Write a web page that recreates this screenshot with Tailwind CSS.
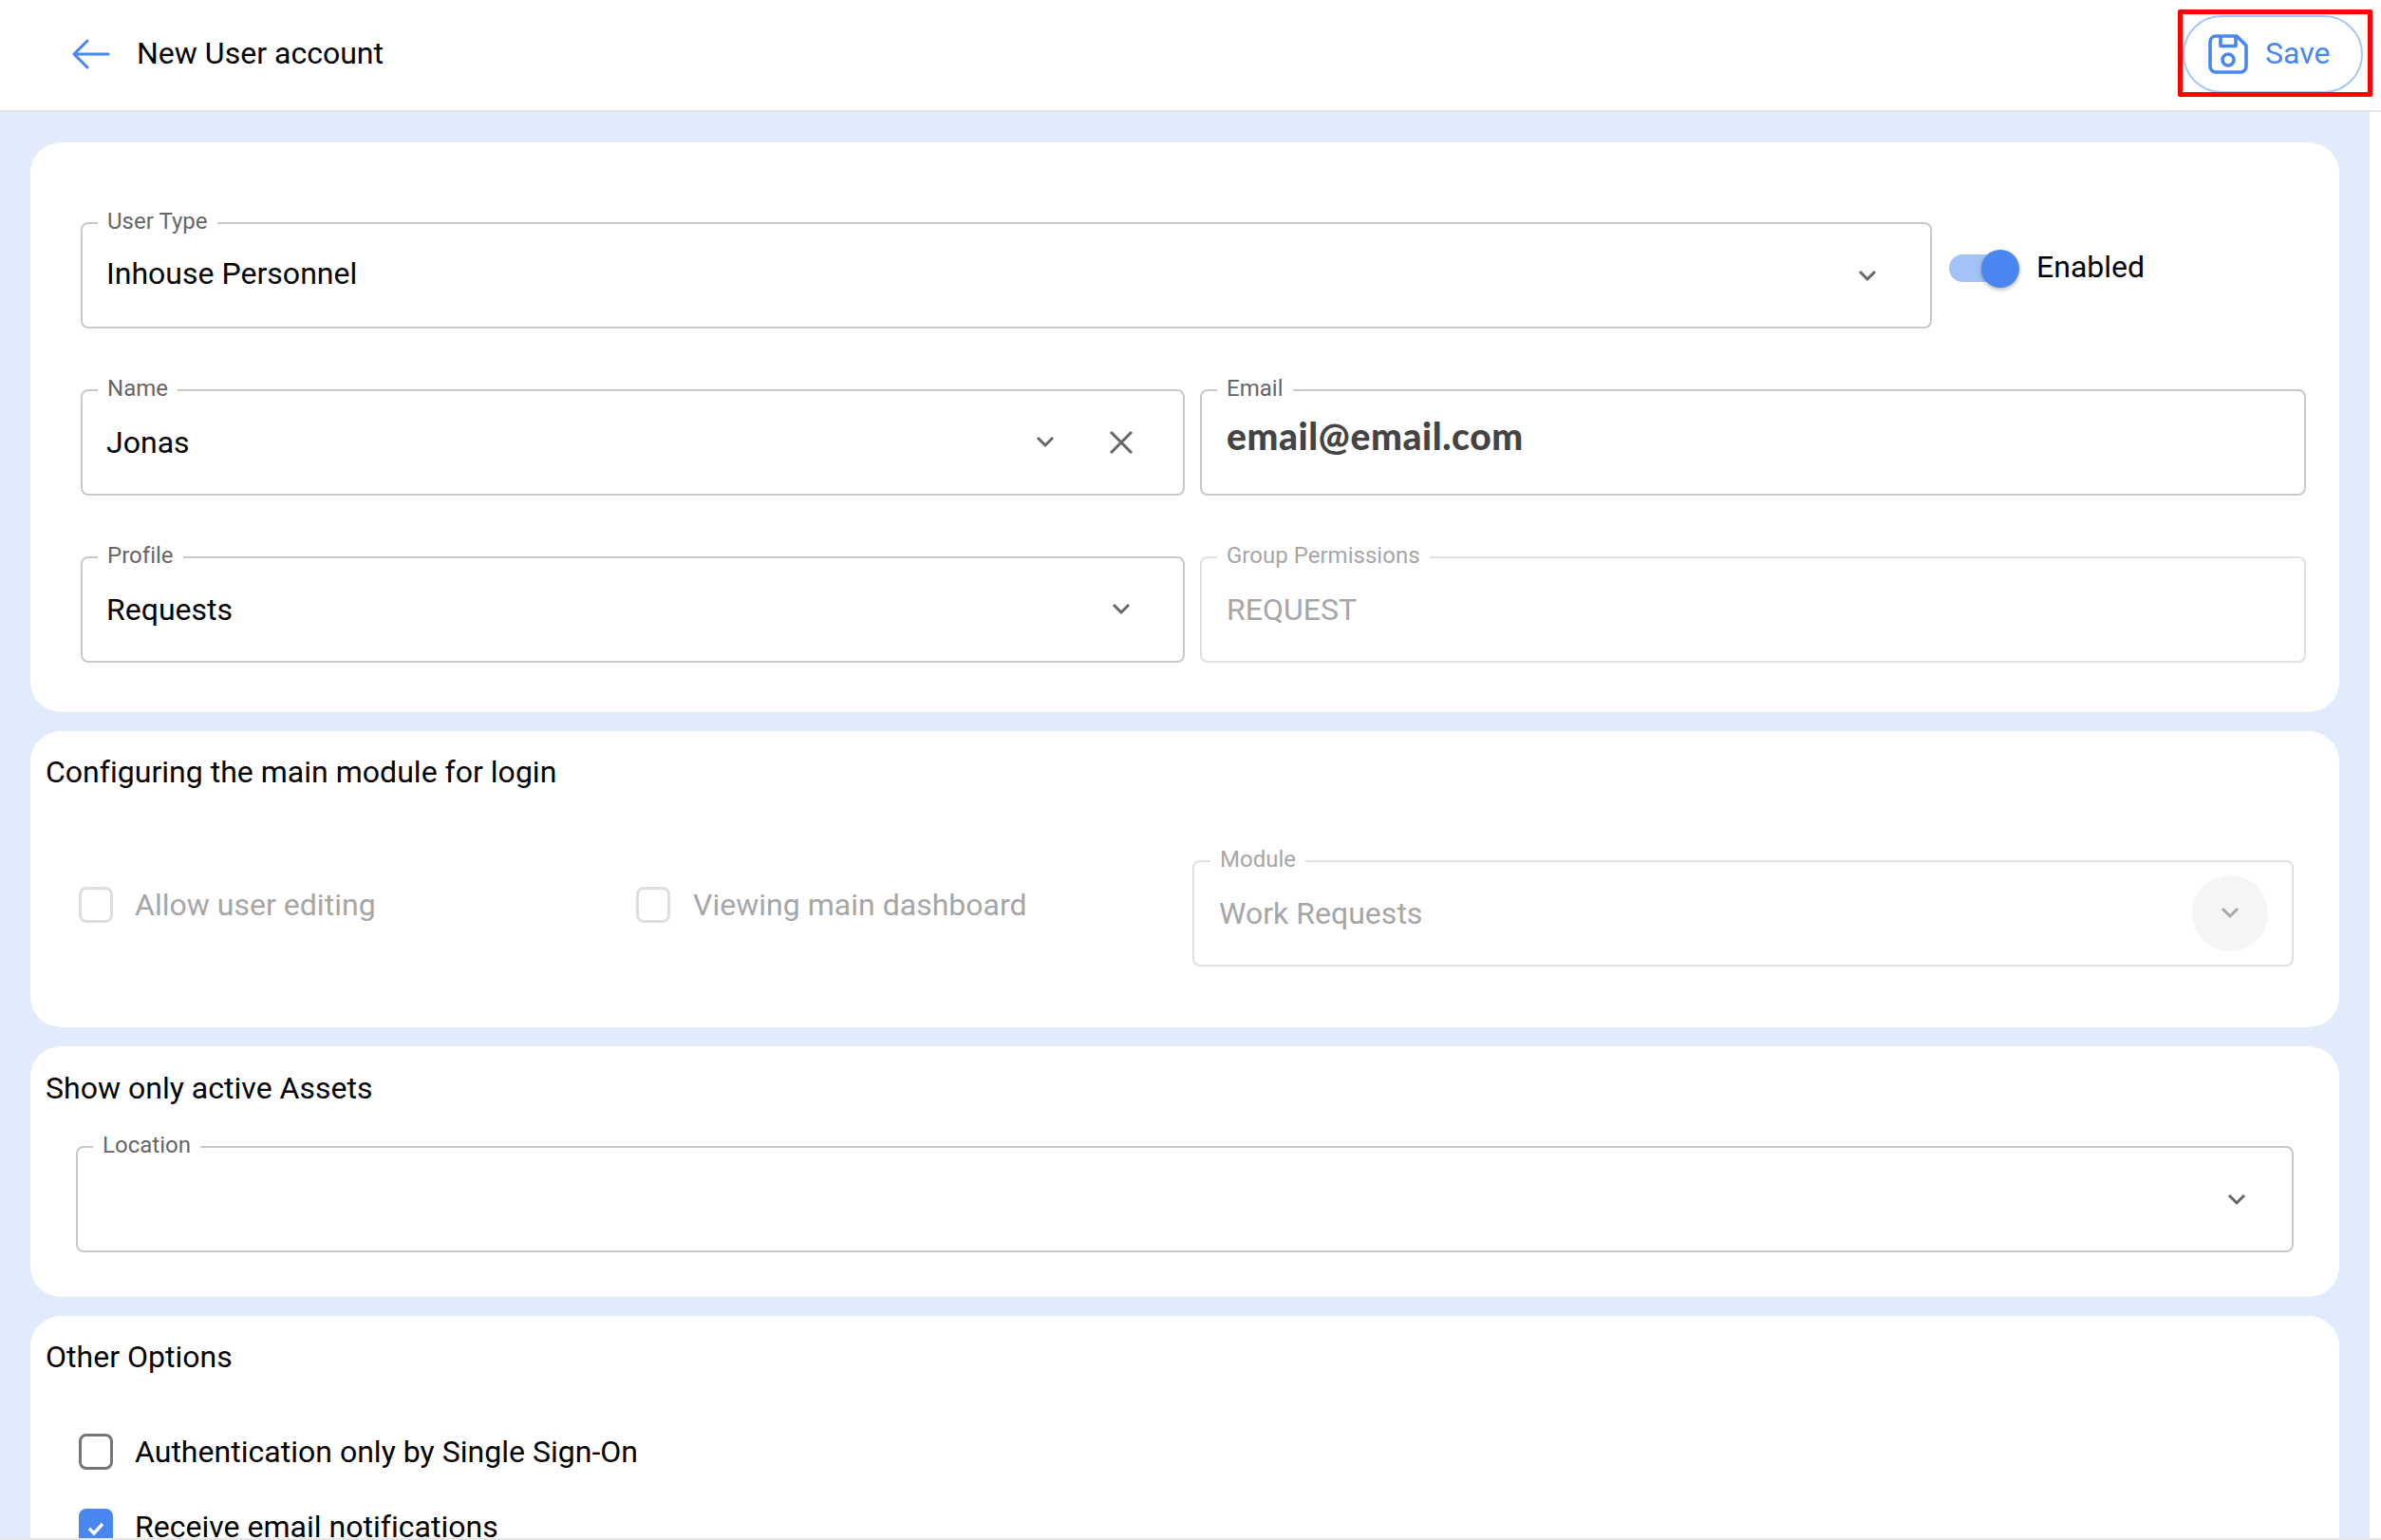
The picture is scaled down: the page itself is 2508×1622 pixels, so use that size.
<!DOCTYPE html>
<html lang="en">
<head>
  <meta charset="UTF-8" />
  <title>New User account</title>
  <script src="https://cdn.jsdelivr.net/npm/@tailwindcss/browser@4"></script>
</head>
<body class="h-[1622px] w-[2508px] overflow-hidden border-b-2 border-[#e6e6e6] bg-white font-['Roboto',sans-serif] text-[32px] tracking-[0.02px] text-black">
  <!-- top bar -->
  <header class="relative flex h-[118px] w-full items-center border-b-2 border-[#e6e6e6] bg-white pb-[2px] pl-[76px] pr-[19px]">
    <svg class="h-[32px] w-[42px] text-[#4a86f0]" viewBox="0 0 42 32" fill="none" stroke="currentColor" stroke-width="3" stroke-linecap="round" stroke-linejoin="round"><path d="M2 16H38M16 2L2 16L16 30"/></svg>
    <span class="mb-[2px] ml-[26px] text-[32px]">New User account</span>
    <button class="ml-auto flex h-[82px] w-[190px] items-center rounded-full border-2 border-[#a9c6f8] pl-[25px] text-[#4a86f0]">
      <svg class="h-[42px] w-[42px]" viewBox="0 0 42 42" fill="none" stroke="currentColor" stroke-width="3.6" stroke-linejoin="round"><path d="M8 2H30L40 12V34A6 6 0 0 1 34 40H8A6 6 0 0 1 2 34V8A6 6 0 0 1 8 2Z"/><path d="M13 2V12.500H29V2"/><circle cx="21" cy="27" r="6"/></svg>
      <span class="mb-[2px] ml-[18px]">Save</span>
    </button>
    <div class="absolute left-[2294px] top-[10px] h-[92px] w-[205px] rounded-[2px] border-[5px] border-[#ff0000]"></div>
  </header>

  <main class="flex w-[2496px] flex-col gap-[20px] bg-[#e2ebfc] px-[32px] pt-[32px]">
    <!-- account -->
    <section class="flex h-[600px] flex-col gap-[64px] rounded-[32px] bg-white pl-[53px] pr-[35px] pt-[84px]">
      <div class="flex">
        <div class="relative flex h-[112px] w-[1950px] items-center rounded-[8px] border-2 border-[#c8c8c8] pb-[4px] pl-[25px]">
          <span class="absolute left-[16px] top-[-17px] bg-white px-[10px] text-[24px] leading-[28px] text-[#666]">User Type</span>
          <span>Inhouse Personnel</span>
          <svg class="absolute left-[1870px] top-[47px] h-[16px] w-[20px] text-[#666]" viewBox="0 0 20 16" fill="none" stroke="currentColor" stroke-width="3"><path d="M2 3L10 11L18 3"/></svg>
        </div>
        <div class="ml-[18px] flex h-[80px] items-center pt-[17px]">
          <div class="relative h-[29px] w-[67px] rounded-full bg-[#a2c2f8]">
            <div class="absolute left-[34px] top-[-5px] h-[40px] w-[40px] rounded-full bg-[#4a86f0] shadow-[0_2px_4px_rgba(0,0,0,0.3)]"></div>
          </div>
          <span class="ml-[25px] pb-[4px]">Enabled</span>
        </div>
      </div>
      <div class="flex gap-[16px]">
        <div class="relative flex h-[112px] w-[1163px] items-center rounded-[8px] border-2 border-[#c8c8c8] pl-[25px]">
          <span class="absolute left-[16px] top-[-17px] bg-white px-[10px] text-[24px] leading-[28px] text-[#666]">Name</span>
          <span>Jonas</span>
          <svg class="absolute left-[1004px] top-[46px] h-[16px] w-[20px] text-[#666]" viewBox="0 0 20 16" fill="none" stroke="currentColor" stroke-width="3"><path d="M2 3L10 11L18 3"/></svg>
          <svg class="absolute left-[1082px] top-[42px] h-[24px] w-[24px] text-[#666]" viewBox="0 0 24 24" fill="none" stroke="currentColor" stroke-width="3"><path d="M1 1L23 23M23 1L1 23"/></svg>
        </div>
        <div class="relative flex h-[112px] w-[1165px] rounded-[8px] border-2 border-[#c8c8c8] pl-[26px] pt-[25px]">
          <span class="absolute left-[16px] top-[-17px] bg-white px-[10px] text-[24px] leading-[28px] text-[#666]">Email</span>
          <span class="font-['Lato',sans-serif] text-[39px] leading-[44px] font-black tracking-[0.6px] text-[#444]">email@email.com</span>
        </div>
      </div>
      <div class="flex gap-[16px]">
        <div class="relative flex h-[112px] w-[1163px] items-center rounded-[8px] border-2 border-[#c8c8c8] pl-[25px]">
          <span class="absolute left-[16px] top-[-17px] bg-white px-[10px] text-[24px] leading-[28px] text-[#666]">Profile</span>
          <span>Requests</span>
          <svg class="absolute left-[1084px] top-[46px] h-[16px] w-[20px] text-[#666]" viewBox="0 0 20 16" fill="none" stroke="currentColor" stroke-width="3"><path d="M2 3L10 11L18 3"/></svg>
        </div>
        <div class="relative flex h-[112px] w-[1165px] items-center rounded-[8px] border-2 border-[#e0e0e0] pl-[26px]">
          <span class="absolute left-[16px] top-[-17px] bg-white px-[10px] text-[24px] leading-[28px] text-[#a6a6a6]">Group Permissions</span>
          <span class="text-[#a6a6a6]">REQUEST</span>
        </div>
      </div>
    </section>

    <!-- main module -->
    <section class="h-[312px] rounded-[32px] bg-white pl-[16px] pt-[24px]">
      <h2 class="text-[32px] leading-[38px]">Configuring the main module for login</h2>
      <div class="mt-[74px] flex">
        <div class="flex h-[112px] w-[587px] items-center pb-[19px] pl-[35px] text-[#a6a6a6]">
          <span class="h-[38px] w-[36px] rounded-[8px] border-[3px] border-[#dedede]"></span>
          <span class="ml-[23px]">Allow user editing</span>
        </div>
        <div class="flex h-[112px] w-[621px] items-center pb-[19px] pl-[35px] text-[#a6a6a6]">
          <span class="h-[38px] w-[36px] rounded-[8px] border-[3px] border-[#dedede]"></span>
          <span class="ml-[24px]">Viewing main dashboard</span>
        </div>
        <div class="relative flex h-[112px] w-[1160px] items-center rounded-[8px] border-2 border-[#e0e0e0] pl-[26px]">
          <span class="absolute left-[17px] top-[-17px] bg-white px-[10px] text-[24px] leading-[28px] text-[#a6a6a6]">Module</span>
          <span class="text-[#a6a6a6]">Work Requests</span>
          <div class="absolute right-[25px] top-[14px] flex h-[80px] w-[80px] items-center justify-center rounded-full bg-[#f5f5f5]">
            <svg class="h-[16px] w-[20px] text-[#a6a6a6]" viewBox="0 0 20 16" fill="none" stroke="currentColor" stroke-width="3"><path d="M2 3L10 11L18 3"/></svg>
          </div>
        </div>
      </div>
    </section>

    <!-- assets -->
    <section class="h-[264px] rounded-[32px] bg-white pl-[16px] pt-[25px]">
      <h2 class="text-[32px] leading-[38px]">Show only active Assets</h2>
      <div class="relative mt-[42px] ml-[32px] flex h-[112px] w-[2336px] rounded-[8px] border-2 border-[#c8c8c8]">
        <span class="absolute left-[16px] top-[-17px] bg-white px-[10px] text-[24px] leading-[28px] text-[#666]">Location</span>
        <svg class="absolute right-[48px] top-[47px] h-[16px] w-[20px] text-[#666]" viewBox="0 0 20 16" fill="none" stroke="currentColor" stroke-width="3"><path d="M2 3L10 11L18 3"/></svg>
      </div>
    </section>

    <!-- options -->
    <section class="h-[300px] rounded-[32px] bg-white pl-[51px] pt-[24px]">
      <h2 class="-ml-[35px] text-[32px] leading-[38px]">Other Options</h2>
      <div class="mt-[62px] flex h-[38px] items-center">
        <span class="h-[38px] w-[36px] rounded-[8px] border-[3px] border-[#757575]"></span>
        <span class="mb-[1px] ml-[23px]">Authentication only by Single Sign-On</span>
      </div>
      <div class="mt-[41px] flex h-[38px] items-center">
        <span class="flex h-[38px] w-[36px] items-center justify-center rounded-[8px] bg-[#4a86f0] pt-[4px]">
          <svg class="h-[18px] w-[18px] text-white" viewBox="0 0 18 18" fill="none" stroke="currentColor" stroke-width="3.4"><path d="M2 9L7 14L16 4"/></svg>
        </span>
        <span class="ml-[23px]">Receive email notifications</span>
      </div>
    </section>
  </main>
</body>
</html>
